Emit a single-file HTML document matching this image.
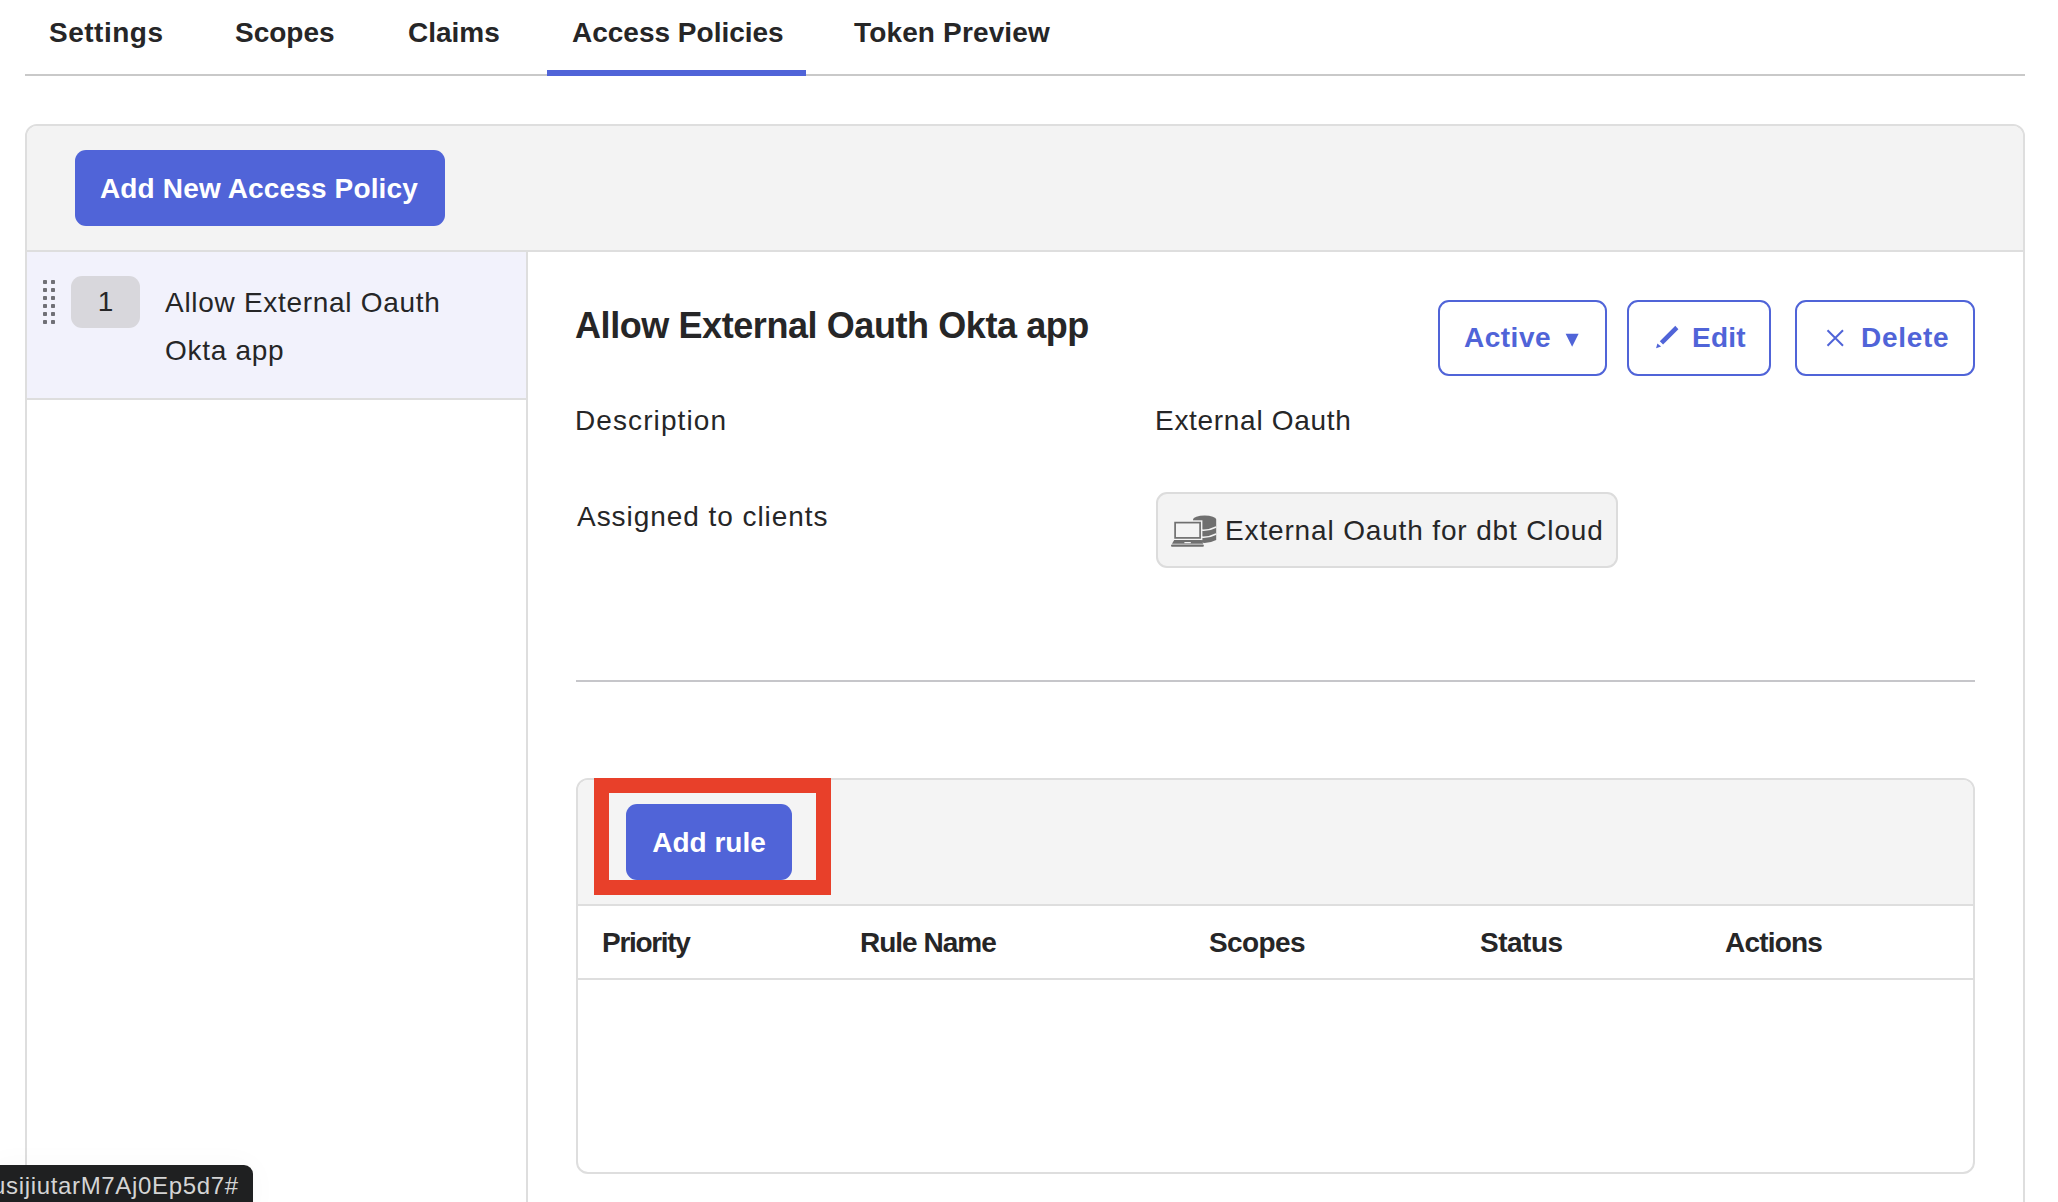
<!DOCTYPE html>
<html><head><meta charset="utf-8">
<style>
*{box-sizing:border-box;margin:0;padding:0}
html,body{width:2058px;height:1202px;overflow:hidden;background:#fff;font-family:"Liberation Sans",sans-serif;color:#262627}
.a{position:absolute;white-space:nowrap}
.tab{position:absolute;top:13px;font-size:28px;font-weight:700;line-height:40px;color:#262627}
.blue{background:#5064d8}
.btn{position:absolute;color:#fff;font-weight:700;font-size:28px;border-radius:11px;text-align:center;line-height:78px;height:76px}
.obtn{position:absolute;top:300px;height:76px;border:2px solid #5064d8;border-radius:11px;color:#5064d8;font-weight:700;font-size:28px;background:#fff}
.reg{font-size:28px;letter-spacing:0.7px;color:#262627}
.th{position:absolute;top:923px;font-size:28px;font-weight:700;letter-spacing:-1px;line-height:40px;color:#262627}
</style></head>
<body>
<!-- tabs -->
<div class="tab" style="left:49px;letter-spacing:0.5px">Settings</div>
<div class="tab" style="left:235px">Scopes</div>
<div class="tab" style="left:408px">Claims</div>
<div class="tab" style="left:572px">Access Policies</div>
<div class="tab" style="left:854px;letter-spacing:0.15px">Token Preview</div>
<div class="a" style="left:25px;top:74px;width:2000px;height:2px;background:#c9c9c9"></div>
<div class="a blue" style="left:547px;top:70px;width:259px;height:6px"></div>

<!-- outer panel -->
<div class="a" style="left:25px;top:124px;width:2000px;height:1200px;border:2px solid #dedede;border-radius:12px;background:#fff;overflow:hidden">
  <div class="a" style="left:0;top:0;width:1996px;height:126px;background:#f3f3f3;border-bottom:2px solid #dedede"></div>
  <div class="a" style="left:0;top:126px;width:501px;height:1100px;border-right:2px solid #dedede"></div>
  <div class="a" style="left:0;top:126px;width:499px;height:148px;background:#f2f2fc;border-bottom:2px solid #dedede"></div>
</div>
<div class="btn blue" style="left:75px;top:150px;width:370px;letter-spacing:0.15px;text-indent:-2px">Add New Access Policy</div>

<!-- drag handle -->
<svg class="a" style="left:43px;top:280px" width="12" height="44" viewBox="0 0 12 44">
<g fill="#707076">
<rect x="0" y="0" width="4" height="4" rx="0.8"/><rect x="8" y="0" width="4" height="4" rx="0.8"/>
<rect x="0" y="8" width="4" height="4" rx="0.8"/><rect x="8" y="8" width="4" height="4" rx="0.8"/>
<rect x="0" y="16" width="4" height="4" rx="0.8"/><rect x="8" y="16" width="4" height="4" rx="0.8"/>
<rect x="0" y="24" width="4" height="4" rx="0.8"/><rect x="8" y="24" width="4" height="4" rx="0.8"/>
<rect x="0" y="32" width="4" height="4" rx="0.8"/><rect x="8" y="32" width="4" height="4" rx="0.8"/>
<rect x="0" y="40" width="4" height="4" rx="0.8"/><rect x="8" y="40" width="4" height="4" rx="0.8"/>
</g></svg>
<div class="a" style="left:71px;top:276px;width:69px;height:52px;background:#d8d7dc;border-radius:11px;font-size:28px;line-height:52px;text-align:center;color:#262627">1</div>
<div class="a reg" style="left:165px;top:279px;line-height:48px;letter-spacing:0.7px">Allow External Oauth<br>Okta app</div>

<!-- title -->
<div class="a" style="left:575px;top:304px;font-size:36px;font-weight:700;letter-spacing:-0.42px;line-height:44px;color:#262627">Allow External Oauth Okta app</div>

<!-- buttons -->
<div class="obtn" style="left:1438px;width:169px">
  <span class="a" style="left:24px;top:16px;line-height:40px;letter-spacing:0.5px">Active</span>
  <svg class="a" style="left:0;top:0" width="165" height="72" viewBox="0 0 165 72"><path d="M125.6 31.8 H138.6 L132.1 44.7 Z" fill="#5064d8"/></svg>
</div>
<div class="obtn" style="left:1627px;width:144px">
  <svg class="a" style="left:21px;top:18px" width="35" height="35" viewBox="0 0 35 35"><path d="M25.3 5.8 L28.4 9.2 L13.1 24.5 L9.8 21.3 Z" fill="#5064d8"/><path d="M7.4 23.6 L11.1 26.5 L6.1 28.2 Z" fill="#5064d8"/></svg>
  <span class="a" style="left:63px;top:16px;line-height:40px;letter-spacing:0.2px">Edit</span>
</div>
<div class="obtn" style="left:1795px;width:180px">
  <svg class="a" style="left:0;top:0" width="176" height="72" viewBox="0 0 176 72"><path d="M30.5 28.2 L46 43.8 M46 28.2 L30.5 43.8" stroke="#5064d8" stroke-width="2"/></svg>
  <span class="a" style="left:64px;top:16px;line-height:40px;letter-spacing:0.7px">Delete</span>
</div>

<!-- description -->
<div class="a reg" style="left:575px;top:401px;line-height:40px;letter-spacing:1.1px">Description</div>
<div class="a reg" style="left:1155px;top:401px;line-height:40px">External Oauth</div>
<div class="a reg" style="left:577px;top:497px;line-height:40px;letter-spacing:0.95px">Assigned to clients</div>

<!-- chip -->
<div class="a" style="left:1156px;top:492px;width:462px;height:76px;background:#f3f3f3;border:2px solid #dcdcdc;border-radius:11px"></div>
<svg class="a" style="left:1170px;top:514px" width="48" height="34" viewBox="0 0 48 34">
  <g fill="#6f6f6f">
   <ellipse cx="34.6" cy="5.6" rx="11.6" ry="4"/>
   <path d="M23 5.6 V26 Q34.6 32 46.2 26 V5.6 Q34.6 11.5 23 5.6Z"/>
  </g>
  <path d="M23 14 Q34.6 19 46.2 13 M23 21 Q34.6 26 46.2 20" stroke="#f3f3f3" stroke-width="1.6" fill="none"/>
  <rect x="2.8" y="6.3" width="29.6" height="19.8" fill="#f3f3f3"/>
  <rect x="5.1" y="8.6" width="25" height="15.3" fill="none" stroke="#6f6f6f" stroke-width="1.7"/>
  <path d="M2 29.8 L4.2 26 H31 L33.3 29.8 Z" fill="#6f6f6f"/>
  <rect x="14.4" y="28" width="6.4" height="1.2" fill="#f3f3f3"/>
  <rect x="1" y="30.6" width="32.9" height="2.2" rx="1.1" fill="#6f6f6f"/>
</svg>
<div class="a reg" style="left:1225px;top:511px;line-height:40px;letter-spacing:0.85px">External Oauth for dbt Cloud</div>

<!-- hr -->
<div class="a" style="left:576px;top:680px;width:1399px;height:2px;background:#c6c6ca"></div>

<!-- rules box -->
<div class="a" style="left:576px;top:778px;width:1399px;height:396px;border:2px solid #dedede;border-radius:12px;overflow:hidden;background:#fff">
  <div class="a" style="left:0;top:0;width:1395px;height:126px;background:#f4f4f4;border-bottom:2px solid #dedede"></div>
  <div class="a" style="left:0;top:198px;width:1395px;height:2px;background:#dedede"></div>
</div>
<div class="btn blue" style="left:626px;top:804px;width:166px">Add rule</div>
<div class="a" style="left:594px;top:778px;width:237px;height:117px;border:15px solid #e8402a"></div>

<div class="th" style="left:602px;letter-spacing:-1.3px">Priority</div>
<div class="th" style="left:860px">Rule Name</div>
<div class="th" style="left:1209px;letter-spacing:-0.6px">Scopes</div>
<div class="th" style="left:1480px;letter-spacing:-0.5px">Status</div>
<div class="th" style="left:1725px;letter-spacing:-0.8px">Actions</div>

<!-- tooltip -->
<div class="a" style="left:-10px;top:1165px;width:263px;height:50px;background:#1f2021;border-radius:9px;box-shadow:0 0 30px rgba(0,0,0,0.03)"></div>
<div class="a" style="left:-8px;top:1171px;font-size:24px;line-height:30px;color:#d4d4d4;letter-spacing:0.66px">usijiutarM7Aj0Ep5d7#</div>
</body></html>
